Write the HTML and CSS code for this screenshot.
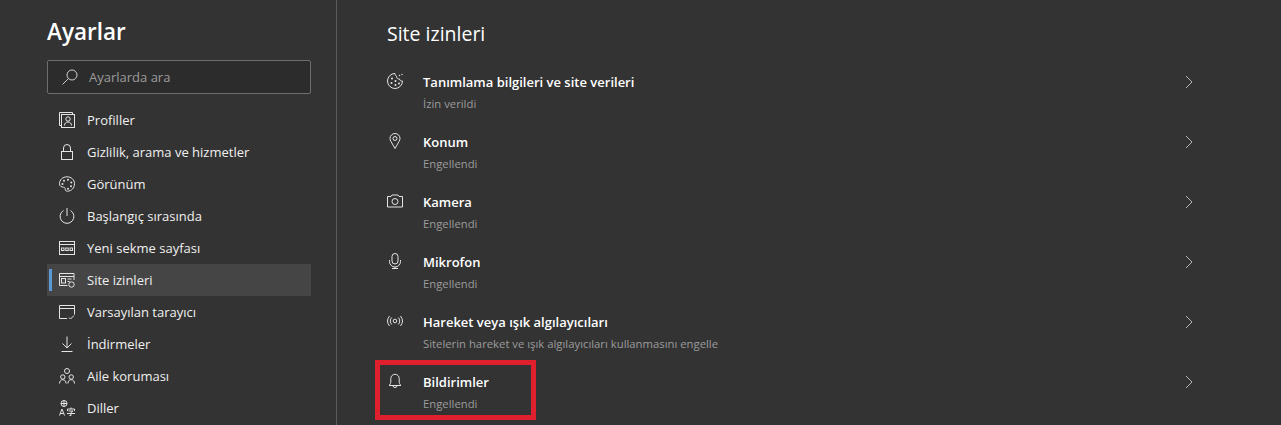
FILE: index.html
```html
<!DOCTYPE html>
<html lang="tr">
<head>
    <meta charset="UTF-8">
    <title>Ayarlar</title>
    <link rel="stylesheet" href="styles.css">
</head>
<body>
    <div class="page">
        <aside class="sidebar">
            <h1 class="app-title">Ayarlar</h1>
            <div class="search">
                <svg class="search-icon" viewBox="0 0 16 16"><circle cx="10" cy="6" r="5"/><path d="M6.400 9.600 0.600 15.400"/></svg>
                <span>Ayarlarda ara</span>
            </div>
            <nav class="nav">
                <div class="nav-item">
                    <svg class="icon" viewBox="0 0 16 16"><path d="M2.500 13.500H.5V.5h13v2"/><rect x="2.500" y="2.500" width="13" height="13"/><circle cx="9" cy="7" r="2.200"/><path d="M5.500 13.500c0-2.200 1.500-3.500 3.500-3.500s3.500 1.300 3.500 3.500"/></svg>
                    <span>Profiller</span>
                </div>
                <div class="nav-item">
                    <svg class="icon" viewBox="0 0 16 16"><rect x="2.500" y="7.500" width="11" height="8"/><path d="M4.500 7.500V4a3.500 3.500 0 0 1 7 0v3.500"/></svg>
                    <span>Gizlilik, arama ve hizmetler</span>
                </div>
                <div class="nav-item">
                    <svg class="icon" viewBox="0 0 16 16"><path d="M8 .8C3.700.8.500 3.900.500 7.800c0 2.700 2.300 3.200 4 3.400 1.400.2 1.900.8 1.700 1.800-.2 1.300.7 2.200 2.200 2.200 4.100 0 7.100-3.300 7.100-7.500C15.500 3.700 12.300.8 8 .8z"/><g class="dots"><circle cx="5" cy="4.800" r="1"/><circle cx="9" cy="3.800" r="1"/><circle cx="12.300" cy="6.500" r="1"/><circle cx="12" cy="10.300" r="1"/><circle cx="9" cy="12.800" r="1"/><circle cx="3.500" cy="8" r="1"/></g></svg>
                    <span>Görünüm</span>
                </div>
                <div class="nav-item">
                    <svg class="icon" viewBox="0 0 16 16"><path d="M8 0v8"/><path d="M4.500 2.500a6.900 6.900 0 1 0 7 0"/></svg>
                    <span>Başlangıç sırasında</span>
                </div>
                <div class="nav-item">
                    <svg class="icon" viewBox="0 0 16 16"><rect x=".5" y="1.500" width="15" height="13"/><path d="M.5 4.500h15"/><rect x="2.500" y="8" width="2.500" height="2.500"/><rect x="6.750" y="8" width="2.500" height="2.500"/><rect x="11" y="8" width="2.500" height="2.500"/></svg>
                    <span>Yeni sekme sayfası</span>
                </div>
                <div class="nav-item active">
                    <svg class="icon" viewBox="0 0 16 16"><path d="M8.500 13.500H.5v-12h14.500v6.500"/><path d="M.5 4.500h14.500"/><rect x="2.500" y="6.500" width="4" height="4.500"/><path d="M8.500 7h4M8.500 9.500h2"/><circle cx="12.500" cy="12.500" r="2.700"/></svg>
                    <span>Site izinleri</span>
                </div>
                <div class="nav-item">
                    <svg class="icon" viewBox="0 0 16 16"><path d="M8 14.500H.5V1.500h15v9"/><path d="M.5 4.500h15"/><path d="M10 13.500l1.500 1.500 3.500-3.500"/></svg>
                    <span>Varsayılan tarayıcı</span>
                </div>
                <div class="nav-item">
                    <svg class="icon" viewBox="0 0 16 16"><path d="M8 .5v11.500M3.500 7.500 8 12l4.500-4.500M2.500 15.500h11"/></svg>
                    <span>İndirmeler</span>
                </div>
                <div class="nav-item">
                    <svg class="icon" viewBox="0 0 16 16"><circle cx="8" cy="3" r="2.500"/><circle cx="3.800" cy="9" r="2.200"/><circle cx="12.200" cy="9" r="2.200"/><path d="M.5 15.500c0-2.200 1.300-3.800 3.300-3.800s3.300 1.600 3.300 3.800M8.900 15.500c0-2.200 1.300-3.800 3.300-3.800s3.300 1.600 3.300 3.800"/></svg>
                    <span>Aile koruması</span>
                </div>
                <div class="nav-item">
                    <svg class="icon" viewBox="0 0 16 16"><circle cx="5" cy="3.500" r="3"/><path d="M2 3.500h6M5 .5v6"/><path d="M.5 15.500 3 9l2.500 6.500M1.500 13.500h3M12 7.500v1.500M8.500 11V9h7v2M9.500 11h4.500l-2 1.500V15.500h-1.500M8 13.500h8"/></svg>
                    <span>Diller</span>
                </div>
            </nav>
        </aside>
        <main class="content">
            <h2 class="content-title">Site izinleri</h2>
            <div class="perm-row">
                <svg class="icon" viewBox="0 0 16 16"><path d="M8 .5a7.500 7.500 0 1 0 7.500 7.500c-1.500.3-2.800-.5-3-2-1.800.2-3-1-3-2.800C8.800 3 8 1.800 8 .5z"/><g class="dots"><circle cx="5" cy="5.500" r="1"/><circle cx="4.500" cy="10" r="1"/><circle cx="8.500" cy="8" r="1"/><circle cx="8.500" cy="12" r="1"/><circle cx="12" cy="10.500" r="1"/><circle cx="12.500" cy="2.500" r=".7"/><circle cx="15" cy="1.500" r=".7"/></g></svg>
                <div class="perm-text">
                    <div class="perm-name">Tanımlama bilgileri ve site verileri</div>
                    <div class="perm-desc">İzin verildi</div>
                </div>
                <svg class="chevron" viewBox="0 0 8 14"><path d="M1 1l6 6-6 6"/></svg>
            </div>
            <div class="perm-row">
                <svg class="icon" viewBox="0 0 16 16"><path d="M8 15.500 4 8.500C3.300 7.300 3 6.500 3 5.500a5 5 0 0 1 10 0c0 1-.3 1.800-1 3z"/><circle cx="8" cy="5.500" r="2"/></svg>
                <div class="perm-text">
                    <div class="perm-name">Konum</div>
                    <div class="perm-desc">Engellendi</div>
                </div>
                <svg class="chevron" viewBox="0 0 8 14"><path d="M1 1l6 6-6 6"/></svg>
            </div>
            <div class="perm-row">
                <svg class="icon" viewBox="0 0 16 16"><path d="M.5 3.500h3.500l1-1.500h6l1 1.500h3.500v10.500H.5z"/><circle cx="8" cy="8.500" r="3"/></svg>
                <div class="perm-text">
                    <div class="perm-name">Kamera</div>
                    <div class="perm-desc">Engellendi</div>
                </div>
                <svg class="chevron" viewBox="0 0 8 14"><path d="M1 1l6 6-6 6"/></svg>
            </div>
            <div class="perm-row">
                <svg class="icon" viewBox="0 0 16 16"><rect x="5" y=".5" width="6" height="10.500" rx="3"/><path d="M2.500 7v1.500a5.500 5.500 0 0 0 11 0V7M8 14v1.500M5 15.500h6"/></svg>
                <div class="perm-text">
                    <div class="perm-name">Mikrofon</div>
                    <div class="perm-desc">Engellendi</div>
                </div>
                <svg class="chevron" viewBox="0 0 8 14"><path d="M1 1l6 6-6 6"/></svg>
            </div>
            <div class="perm-row">
                <svg class="icon" viewBox="0 0 16 16"><circle cx="8" cy="8" r="1.800"/><path d="M4.700 4.500a5 5 0 0 0 0 7M11.300 4.500a5 5 0 0 1 0 7M2.500 3a8 8 0 0 0 0 10M13.500 3a8 8 0 0 1 0 10"/></svg>
                <div class="perm-text">
                    <div class="perm-name">Hareket veya ışık algılayıcıları</div>
                    <div class="perm-desc">Sitelerin hareket ve ışık algılayıcıları kullanmasını engelle</div>
                </div>
                <svg class="chevron" viewBox="0 0 8 14"><path d="M1 1l6 6-6 6"/></svg>
            </div>
            <div class="perm-row marked">
                <svg class="icon" viewBox="0 0 16 16"><path d="M2 12.500c1.500-1 1.800-2.500 1.800-4.500V5.500a4.200 4.200 0 0 1 8.400 0V8c0 2 .3 3.500 1.800 4.500z"/><path d="M6 12.500a2 2 0 0 0 4 0"/></svg>
                <div class="perm-text">
                    <div class="perm-name">Bildirimler</div>
                    <div class="perm-desc">Engellendi</div>
                </div>
                <svg class="chevron" viewBox="0 0 8 14"><path d="M1 1l6 6-6 6"/></svg>
                <div class="red-box"></div>
            </div>
        </main>
    </div>
</body>
</html>
```

FILE: styles.css
```css
:root {
    --bg: #333333; --line: #5c5c5c; --text: #ffffff; --muted: #9c9c9c;
    --active: #454545; --accent: #5a9bd5; --marker: #e0202c;
}
html, body { height: 100%; }
body {
    margin: 0; background-color: var(--bg); color: var(--text); overflow: hidden;
    font-family: "Open Sans", "Noto Sans", sans-serif;
}
.page { display: flex; height: 425px; }

.sidebar {
    width: 337px; flex-shrink: 0; box-sizing: border-box; padding: 15px 25px 0 47px;
    border-right: 1px solid var(--line);
}
.app-title { margin: 0 0 11px; font-size: 22.5px; line-height: 34px; font-weight: 600; }
.search {
    display: flex; align-items: center; gap: 11px; height: 34px; box-sizing: border-box;
    padding-left: 14px; background-color: #2c2c2c; border: 1px solid #6e6e6e; border-radius: 2px;
    color: var(--muted); font-size: 13px;
}
.search-icon { width: 16px; height: 16px; fill: none; stroke: #d0d0d0; stroke-width: 1; }
.nav { margin-top: 10px; }
.nav-item {
    position: relative; display: flex; align-items: center; gap: 12px; height: 32px;
    padding-left: 12px; font-size: 13px; color: #f0f0f0;
}
.nav-item.active { background-color: var(--active); }
.nav-item.active::before {
    content: ""; position: absolute; left: 2px; top: 5px; width: 3px; height: 22px;
    background-color: var(--accent);
}

.icon { width: 16px; height: 16px; flex-shrink: 0; fill: none; stroke: #e4e4e4; stroke-width: 1; }
.icon .dots { fill: #e4e4e4; stroke: none; }

.content { flex: 1; padding: 18px 81px 0 50px; }
.content-title { margin: 0 0 14px; font-size: 19.5px; line-height: 32px; font-weight: 400; }
.perm-row { position: relative; display: flex; height: 60px; box-sizing: border-box; padding-top: 9px; }
.perm-text { flex: 1; margin-left: 20px; }
.perm-name { font-size: 13px; line-height: 18px; font-weight: 600; }
.perm-desc { margin-top: 4px; font-size: 11.3px; line-height: 18px; color: var(--muted); }
.chevron { width: 8px; height: 14px; margin: 2px 7px 0 0; fill: none; stroke: #b5b5b5; stroke-width: 1; }
.red-box {
    position: absolute; left: -12px; top: -4px; width: 161px; height: 60px; box-sizing: border-box;
    border: 5px solid var(--marker);
}
```
